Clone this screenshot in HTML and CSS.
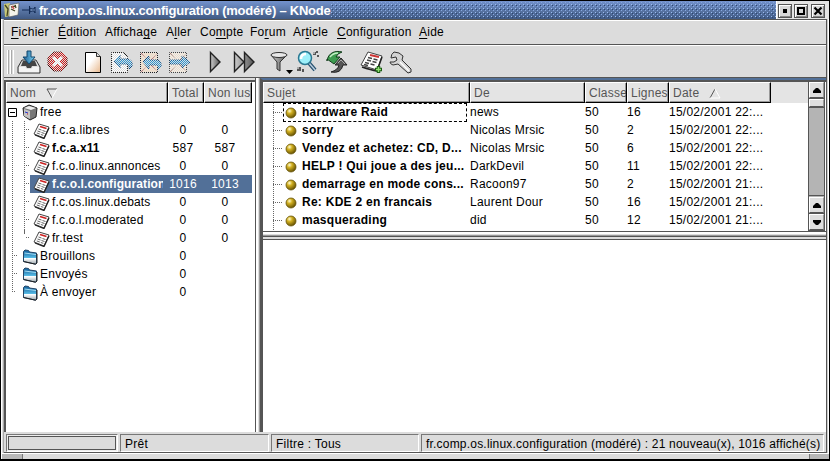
FILE: index.html
```
<!DOCTYPE html>
<html lang="fr">
<head>
<meta charset="utf-8">
<title>KNode</title>
<link rel="stylesheet" href="styles.css">
</head>
<body>
<svg class="defs" width="0" height="0">
<defs>
<linearGradient id="tri" x1="0" x2="1"><stop offset="0" stop-color="#ccc"/><stop offset="1" stop-color="#555"/></linearGradient>
<linearGradient id="blue" x1="0" x2="1"><stop offset="0" stop-color="#18598e"/><stop offset="1" stop-color="#7dd6f7"/></linearGradient>
<linearGradient id="fold" x1="0" y1="0" x2="0" y2="1"><stop offset="0" stop-color="#1c6fa8"/><stop offset=".15" stop-color="#1c6fa8"/><stop offset=".55" stop-color="#58bce6"/><stop offset=".6" stop-color="#fff"/><stop offset="1" stop-color="#98a4aa"/></linearGradient>
<linearGradient id="paper" x1="0" y1="0" x2="1" y2="1"><stop offset=".4" stop-color="#fff"/><stop offset="1" stop-color="#e8b88c"/></linearGradient>
<radialGradient id="gold" cx=".35" cy=".3" r=".75"><stop offset="0" stop-color="#fffbd0"/><stop offset=".35" stop-color="#d2b021"/><stop offset="1" stop-color="#5e4b00"/></radialGradient>
<symbol id="news" viewBox="0 0 17 16">
<path d="M6 1 16 4 11 15 1 11z" fill="#fff" stroke="#444"/><path d="M2 12 11 15.500 16 5" fill="none" stroke="#222" stroke-width="1.300"/>
<path d="m7 3.500 6.500 2" stroke="#c22" stroke-width="1.800"/><path d="m5.500 6 3 1m1 .5 3 1M4.500 8l3 1m1 .5 3 1M3.800 10l3 1m1 .5 2.500.8" stroke="#666"/>
</symbol>
<symbol id="folder" viewBox="0 0 16 16">
<path d="M1 2.500 2.500 1l3.500.5 1 1.500 7 1v10l-1 1.200L1 12.500z" fill="url(#fold)" stroke="#246"/><path d="M1 12.500 13 15.200 14.500 14V5" fill="none" stroke="#222"/><path d="m2 4 11.500 1.500" stroke="#a6dcf2"/>
</symbol>
<symbol id="ball" viewBox="0 0 12 12"><circle cx="6" cy="6" r="5" fill="url(#gold)" stroke="#685509" stroke-width=".8"/></symbol>
</defs>
</svg>
<div class="window">
<header class="title">
<svg class="appicon" viewBox="0 0 16 16"><path d="M0 2 6 1v13l-5 1z" fill="#c8c878"/><path d="m5 3 10-2-1 12-9 2z" fill="#f4f4ec" stroke="#555" stroke-width=".6"/><path d="m1 3 3 4-1 7M7 5l5-1M7 7l4 2M11 3l1 3" stroke="#442" fill="none" stroke-width="1.300"/><path d="m8 4 2 3" stroke="#c55" stroke-width="1.500"/></svg>
<svg class="pin" viewBox="0 0 14 8"><path d="M0 4h7M7.500 0v8M8 2l2 1h2l1-2v6l-1-2h-2L8 6z" fill="#7f9bc8" stroke="#122b55"/></svg>
<span class="caption">fr.comp.os.linux.configuration (modéré) – KNode</span>
<span class="dots"></span>
<span class="controls">
<button><svg viewBox="0 0 10 10"><path d="M3 3h4v4H3z"/></svg></button>
<button><svg viewBox="0 0 10 10"><path d="M2 2h6v6H2z" fill="none" stroke="#000" stroke-width="2"/></svg></button>
<button class="close"><svg viewBox="0 0 10 10"><path d="m1.500 1.500 7 7m0-7-7 7" stroke="#000" stroke-width="2.200"/></svg></button>
</span>
</header>
<div class="body">
<nav class="menu"><span><u>F</u>ichier</span><span><u>É</u>dition</span><span>Afficha<u>g</u>e</span><span>A<u>l</u>ler</span><span>Co<u>m</u>pte</span><span>Fo<u>r</u>um</span><span>Ar<u>t</u>icle</span><span><u>C</u>onfiguration</span><span><u>A</u>ide</span></nav>
<div class="toolbar">
<span class="grip"></span>
<svg viewBox="0 0 24 24"><path d="M5 10h14l4 7v6H1v-6z" fill="#ddd" stroke="#333"/><path d="M4 16h5l1 2h4l1-2h5l-2-5H6z" fill="#444"/><path d="M2 17h6l2 2h4l2-2h6v5H2z" fill="#f4f4f4"/><path d="M2 22.500h20" stroke="#999"/><path d="M10 1h4v6h4l-6 7-6-7h4z" fill="url(#blue)" stroke="#12486f"/></svg>
<svg class="off" viewBox="0 0 24 24"><path d="M8 2h8l5 5v8l-5 6H8l-6-6V7z" fill="#d01818" stroke="#400"/><path d="m7 7 9 9m0-9-9 9" stroke="#fff" stroke-width="3"/></svg>
<i></i>
<svg viewBox="0 0 24 24"><path d="M4.500 2.500h11l4 4v16h-15z" fill="url(#paper)" stroke="#000"/><path d="M15.500 2.500v4h4" fill="#ddd" stroke="#333"/></svg>
<svg class="off" viewBox="0 0 24 24"><path d="M1.500 2.500h12l4 4v16h-16z" fill="#fff" stroke="#222"/><path d="m4 11 6-6v4h8q5 1 4 7l-3 3q1-5-3-5h-6v4z" fill="#2b96d4" stroke="#0b4a83"/></svg>
<svg class="off" viewBox="0 0 24 24"><path d="M1.500 2.500h17v20h-17z" fill="#ffe2c2" stroke="#222"/><path d="m2 3 16 19m0-19L2 22" stroke="#b66"/><path d="m4 12 6-6v4h8q5 1 4 7l-3 3q1-5-3-5h-6v4z" fill="#2b96d4" stroke="#0b4a83"/></svg>
<svg class="off" viewBox="0 0 24 24"><path d="M1.500 2.500h17v20h-17z" fill="#ffeeda" stroke="#444"/><path d="m2 3 16 19m0-19L2 22" stroke="#a76"/><path d="M2 10h12V6l8 6-8 6v-4H2z" fill="#2b96d4" stroke="#0b4a83"/></svg>
<i></i>
<svg viewBox="0 0 24 24"><path d="M7.500 2.500 17 12l-9.500 9.500z" fill="url(#tri)" stroke="#222" stroke-width="1.400"/></svg>
<svg viewBox="0 0 24 24"><path d="M2.500 2.500 12 12l-9.500 9.500zM12.500 2.500 22 12l-9.500 9.500z" fill="url(#tri)" stroke="#222" stroke-width="1.400"/></svg>
<i></i>
<svg viewBox="0 0 24 24"><path d="m4 5 6 7v7l3 2v-9l7-7z" fill="url(#tri)" stroke="#333"/><ellipse cx="12" cy="5" rx="8" ry="2.500" fill="#e8e8e8" stroke="#333"/><path d="M19 20h7l-3.500 4z" fill="#000"/></svg>
<svg viewBox="0 0 24 24"><path d="m13 13 6 7" stroke="#24506e" stroke-width="4"/><path d="m13 13 6 7" stroke="#bcd" stroke-width="1.500"/><circle cx="9" cy="8" r="6.500" fill="#9df0fa" stroke="#2b7892" stroke-width="1.500"/><path d="M5 9q0-5 5-5" fill="none" stroke="#fff" stroke-width="2.500"/><path d="M17 2h3v3h-3zM21 5h2v2h-2zM1 17h4v4H1zM6 19h2v3H6zM20 1h2v2h-2z" fill="#555"/><path d="M17 2h2v2h-2zM1 17h2v2H1z" fill="#aaa"/></svg>
<svg viewBox="0 0 24 24"><path d="M2 11C3 3 10 0 17 2l-4 2-2 3h4l-6 7-7-5z" fill="#3d9c50" stroke="#123d1b"/><path d="M5 7q3-4 8-4" fill="none" stroke="#c3f0c5" stroke-width="1.500"/><path d="M6 22q10 2 12-7h4l-6-7-6 7h4q-1 5-8 7z" fill="#555" stroke="#222"/><path d="m13 13 3-3 4 4" fill="none" stroke="#aaa"/></svg>
<i></i>
<svg viewBox="0 0 24 24"><path d="M8 2 22 6l-5 14L1 15z" fill="#fff" stroke="#444"/><path d="M2 17q9 3 15 4l5-14" fill="none" stroke="#222" stroke-width="1.500"/><path d="m10 5 9 2" stroke="#c33" stroke-width="2"/><path d="m8 7.500 4 1m1.500.5 4 1M7 10l4 1m1.500.5 4 1M5 12.500l4 1m1.500.5 4 1M4 14.500l4 1" stroke="#444" stroke-width="1.300"/><path d="M18.500 16v7m-3.500-3.500h7" stroke="#175a10" stroke-width="3.500"/><path d="M18.500 17v5m-2.500-2.500h5" stroke="#8fe070" stroke-width="1.500"/></svg>
<svg viewBox="0 0 24 24"><path d="M2 8q0-4 3-6l5 1 4 3-1 4 9 9v3l-3 1-10-9-5 1q-3-1-3-3h4l3-2-1-3z" fill="#d4d4d4" stroke="#333"/><path d="m11 12 9 9" stroke="#fff" stroke-width="1.300"/></svg>
</div>
<main class="panes">
<section class="tree">
<div class="head treegrid"><b>Nom <svg viewBox="0 0 12 11"><path d="M11 1H1l5 9" fill="none" stroke="#555"/><path d="m11 1-5 9" stroke="#fff"/></svg></b><b>Total</b><b>Non lus</b></div>
<div class="rows">
<div class="row treegrid"><span class="name root"><svg class="box" viewBox="0 0 9 9"><path d="M.5.5h8v8h-8zM2 4.500h5" fill="#fff" stroke="#000"/></svg><svg class="ico cube" viewBox="0 0 16 17"><path d="m1 4 6-3 8 3-1 9-6 3-6-4z" fill="#777" stroke="#222"/><path d="m2 4 5-2 7 2-5 2z" fill="#eee"/><path d="m2 5 6 2v8l-6-3z" fill="#c4c4c4"/><path d="m3 8 3 1" stroke="#23c"/><path d="M5 10h1" stroke="#c22"/></svg>free</span></div>
<div class="row treegrid"><span class="name leaf"><svg class="ico"><use href="#news"/></svg>f.c.a.libres</span><span>0</span><span>0</span></div>
<div class="row treegrid"><span class="name leaf bold"><svg class="ico"><use href="#news"/></svg>f.c.a.x11</span><span>587</span><span>587</span></div>
<div class="row treegrid"><span class="name leaf tight"><svg class="ico"><use href="#news"/></svg>f.c.o.linux.annonces</span><span>0</span><span>0</span></div>
<div class="row treegrid selected"><span class="name leaf bold"><svg class="ico"><use href="#news"/></svg>f.c.o.l.configuration</span><span>1016</span><span>1013</span></div>
<div class="row treegrid"><span class="name leaf tight"><svg class="ico"><use href="#news"/></svg>f.c.os.linux.debats</span><span>0</span><span>0</span></div>
<div class="row treegrid"><span class="name leaf tight"><svg class="ico"><use href="#news"/></svg>f.c.o.l.moderated</span><span>0</span><span>0</span></div>
<div class="row treegrid"><span class="name leaf last"><svg class="ico"><use href="#news"/></svg>fr.test</span><span>0</span><span>0</span></div>
<div class="row treegrid"><span class="name folder"><svg class="ico"><use href="#folder"/></svg>Brouillons</span><span>0</span></div>
<div class="row treegrid"><span class="name folder"><svg class="ico"><use href="#folder"/></svg>Envoyés</span><span>0</span></div>
<div class="row treegrid"><span class="name folder end"><svg class="ico"><use href="#folder"/></svg>À envoyer</span><span>0</span></div>
</div>
</section>
<div class="vsplit"></div>
<section class="right">
<div class="list">
<div class="table">
<div class="head listgrid"><b>Sujet</b><b>De</b><b>Classe</b><b>Lignes</b><b>Date <svg viewBox="0 0 12 11"><path d="M1 10 6 1" stroke="#555"/><path d="m6 1 5 9H1" fill="none" stroke="#fff"/></svg></b></div>
<div class="msg listgrid"><span class="subject focus"><svg><use href="#ball"/></svg><em>hardware Raid</em></span><span>news</span><span>50</span><span>16</span><span>15/02/2001 22:...</span></div>
<div class="msg listgrid"><span class="subject"><svg><use href="#ball"/></svg><em>sorry</em></span><span>Nicolas Mrsic</span><span>50</span><span>2</span><span>15/02/2001 22:...</span></div>
<div class="msg listgrid"><span class="subject"><svg><use href="#ball"/></svg><em>Vendez et achetez: CD, D...</em></span><span>Nicolas Mrsic</span><span>50</span><span>6</span><span>15/02/2001 22:...</span></div>
<div class="msg listgrid"><span class="subject"><svg><use href="#ball"/></svg><em>HELP ! Qui joue a des jeu...</em></span><span>DarkDevil</span><span>50</span><span>11</span><span>15/02/2001 22:...</span></div>
<div class="msg listgrid"><span class="subject"><svg><use href="#ball"/></svg><em>demarrage en mode cons...</em></span><span>Racoon97</span><span>50</span><span>2</span><span>15/02/2001 21:...</span></div>
<div class="msg listgrid"><span class="subject"><svg><use href="#ball"/></svg><em>Re: KDE 2 en francais</em></span><span>Laurent Dour</span><span>50</span><span>16</span><span>15/02/2001 21:...</span></div>
<div class="msg listgrid"><span class="subject"><svg><use href="#ball"/></svg><em>masquerading</em></span><span>did</span><span>50</span><span>12</span><span>15/02/2001 21:...</span></div>
</div>
<div class="scroll"><button><svg viewBox="0 0 8 5"><path d="M3 0h2l3 3v2H0V3z"/></svg></button><span class="thumb"></span><span class="trough"></span><button><svg viewBox="0 0 8 5"><path d="M3 0h2l3 3v2H0V3z"/></svg></button><button><svg viewBox="0 0 8 5"><path d="M0 0h8v2L5 5H3L0 2z"/></svg></button></div>
</div>
<div class="hsplit"></div>
<div class="article"></div>
</section>
</main>
<footer class="status"><span class="progress"></span><span>Prêt</span><span>Filtre : Tous</span><span class="group">fr.comp.os.linux.configuration (modéré) : 21 nouveau(x), 1016 affiché(s)</span></footer>
</div>
<div class="handle"><span></span><span></span><span></span></div>
</div>
</body>
</html>
```

FILE: styles.css
```
* { box-sizing: border-box; }
body { margin: 0; width: 830px; height: 461px; overflow: hidden; background: #000; font: 12px/18px "Liberation Sans", Arial, sans-serif; letter-spacing: .25px; color: #000; }
svg { display: block; flex: none; overflow: visible; }
.defs { position: absolute; }
button { padding: 0; margin: 0; }
.window { margin: 1px 1px 2px 1px; width: 828px; height: 458px; display: flex; flex-direction: column; background: #dcdcdc; border-left: 1px solid #fff; }
.title { height: 18px; flex: none; display: flex; align-items: center; margin-left: -1px; background: linear-gradient(#7392cd, #55719f 60%, #405a85); padding-left: 3px; }
.appicon { width: 16px; height: 16px; }
.pin { width: 14px; height: 8px; margin: 0 3px 0 2px; }
.caption { color: #fff; font-weight: bold; font-size: 13px; white-space: nowrap; width: 292px; flex: none; letter-spacing: -.22px; padding-top: 2px; }
.dots { flex: 1; height: 16px; background: linear-gradient(#9bbcf0, #9bbcf0) 0 0/1px 1px; background: conic-gradient(at 1px 1px, transparent 75%, #9bbcf0 0) 0 2px/4px 4px, conic-gradient(at 1px 1px, transparent 75%, #2d466f 0) 1px 3px/4px 4px, conic-gradient(at 1px 1px, transparent 75%, #86a6de 0) 2px 0/4px 4px; }
.controls { width: 53px; height: 18px; background: #e4e4e4; border-left: 1px solid #fff; display: flex; gap: 2px; padding: 3px 0 0 1px; }
.controls button { width: 14px; height: 14px; border: 1px solid #555; box-shadow: inset 1px 1px #fff, inset -1px -1px #888; background: #d8d8d8; display: grid; place-items: center; }
.controls .close { margin-left: 1px; }
.controls svg { width: 10px; height: 10px; }
.body { width: 823px; height: 434px; margin-left: 2px; border-top: 1px solid #555; border-right: 1px solid #555; border-bottom: 1px solid #555; box-shadow: -1px 0 #aaa, 1px 0 #ccc, 2px 0 #fff; display: flex; flex-direction: column; flex: none; }
.menu { height: 25px; flex: none; border-top: 1px solid #fff; border-bottom: 1px solid #555; display: grid; grid-template-columns: 47px 47px 61px 34px 50px 43px 44px 82px 40px; padding: 2px 0 0 7px; white-space: nowrap; }
.menu u { text-underline-offset: 2px; }
.toolbar { height: 33px; flex: none; border-top: 1px solid #fff; border-bottom: 1px solid #555; display: flex; padding: 4px 0 0 3px; }
.toolbar svg { width: 24px; height: 24px; margin-right: 5px; }
.toolbar i { width: 6px; }
.grip { width: 7px; height: 24px; margin-right: 3px; background: repeating-linear-gradient(90deg, #fff 0 1px, #aaa 1px 2px, #dcdcdc 2px 3px); }
.off { mask: conic-gradient(#000 25%, transparent 0 50%, #000 0 75%, transparent 0) 0 0/2px 2px; }
.panes { height: 354px; flex: none; display: flex; background: #fff; }
.tree { width: 251px; border-left: 2px solid #555; border-top: 2px solid #555; margin-top: 2px; box-shadow: 0 -2px #dcdcdc; padding-right: 3px; }
.head { height: 21px; color: #555; background: #e4e4e4; }
.head b { font-weight: normal; white-space: nowrap; overflow: hidden; border: solid; border-width: 1px; border-color: #fff #000 #000 #fff; box-shadow: inset -1px -1px #999; padding: 1px 0 0 3px; display: flex; align-items: center; }
.head svg { width: 12px; height: 11px; margin-left: 10px; }
.treegrid { display: grid; grid-template-columns: 162px 36px 48px; }
.row { height: 18px; text-align: center; line-height: 19px; }
.rows .row > span:nth-child(2) { padding-right: 6px; }
.rows .row > span:nth-child(3) { padding-right: 6px; }
.row .name { display: flex; align-items: center; text-align: left; overflow: hidden; white-space: nowrap; margin-right: 5px; }
.row .ico { width: 17px; height: 16px; }
.root { padding-left: 2px; }
.box { width: 9px; height: 9px; margin-right: 5px; }
.row .cube { width: 16px; height: 17px; margin-right: 2px; }
.leaf { padding-left: 27px; background: linear-gradient(#666 50%, transparent 0) 6px 0/1px 2px repeat-y, linear-gradient(#666 50%, transparent 0) 18px 0/1px 2px repeat-y, linear-gradient(90deg, #666 50%, transparent 0) 20px 8px/2px 1px no-repeat, linear-gradient(90deg, #666 50%, transparent 0) 22px 8px/2px 1px no-repeat; }
.leaf .ico { margin-right: 2px; }
.leaf.last { background-size: 1px 2px, 1px 9px, 2px 1px, 2px 1px; background-repeat: repeat-y, no-repeat, no-repeat, no-repeat; }
.folder { padding-left: 16px; background: linear-gradient(#666 50%, transparent 0) 6px 0/1px 2px repeat-y, linear-gradient(90deg, #666 50%, transparent 0) 8px 8px/2px 1px no-repeat, linear-gradient(90deg, #666 50%, transparent 0) 10px 8px/2px 1px no-repeat; }
.folder.end { background: linear-gradient(90deg, #666 50%, transparent 0) 6px 8px/2px 1px no-repeat, linear-gradient(90deg, #666 50%, transparent 0) 8px 8px/2px 1px no-repeat, repeating-linear-gradient(#666 0 1px, transparent 1px 2px) 6px 0/1px 9px no-repeat; }
.folder .ico { margin-right: 1px; }
.tight { letter-spacing: .12px; }
.bold { font-weight: bold; letter-spacing: .1px; }
.selected { color: #fff; background: linear-gradient(90deg, transparent 24px, #527098 24px); }
.vsplit { width: 5px; border-left: 1px solid #555; background: linear-gradient(90deg, #fff 0 2px, #ddd 2px 3px, #999 3px); }
.right { flex: 1; display: flex; flex-direction: column; border-left: 3px solid #555; border-top: 2px solid #527098; }
.list { height: 151px; flex: none; border-top: 2px solid #555; display: flex; padding-right: 1px; }
.table { flex: 1; }
.listgrid { display: grid; grid-template-columns: 207px 115px 42px 42px 102px; }
.msg { height: 18px; white-space: nowrap; line-height: 19px; }
.msg .subject { padding-left: 22px; display: flex; align-items: center; background: linear-gradient(#666 50%, transparent 0) 10px 0/1px 2px repeat-y, repeating-linear-gradient(90deg, #666 0 1px, transparent 1px 2px) 10px 9px/9px 1px no-repeat; }
.subject svg { width: 12px; height: 12px; margin-right: 5px; }
.subject em { font-style: normal; font-weight: bold; letter-spacing: .26px; }
.focus { position: relative; }
.focus::after { content: ""; position: absolute; left: 20px; right: 3px; top: 0; bottom: 0; border: 1px dashed #000; }
.scroll { width: 17px; height: 149px; border: 1px solid #555; border-top: 0; background: #b4b4b4; display: flex; flex-direction: column; }
.scroll button, .thumb { height: 16px; flex: none; background: #dedede; border: 1px solid #fff; border-right-color: #999; border-bottom-color: #555; display: grid; place-items: center; box-shadow: 0 1px #555; }
.scroll button svg { width: 8px; height: 5px; }
.thumb { height: 8px; margin-top: 1px; }
.trough { flex: 1; margin-bottom: 1px; border-bottom: 1px solid #555; }
.scroll button + button { margin-top: 1px; }
.hsplit { height: 8px; flex: none; border-top: 1px solid #555; background: linear-gradient(#fff 0 2px, #ddd 2px 3px, #999 3px 4px, #555 4px 5px, #ddd 5px); }
.article { flex: 1; border-top: 1px solid #555; }
.status { flex: 1; display: flex; gap: 2px; padding: 2px 2px 2px 2px; }
.status span { height: 18px; border: 1px solid #777; border-right-color: #fff; border-bottom-color: #fff; padding-left: 4px; white-space: nowrap; line-height: 18px; flex: none; }
.status span:nth-child(1) { width: 112px; box-shadow: inset 0 0 0 1px #eee, inset 0 0 0 2px #555; }
.status span:nth-child(2) { width: 149px; }
.status span:nth-child(3) { width: 148px; }
.status span:nth-child(4) { width: 403px; letter-spacing: .2px; }
.handle { flex: 1; display: flex; border-top: 1px solid #fff; }
.handle span { flex: 1; background: #dcdcdc; border-left: 1px solid #777; }
.handle span:first-child, .handle span:last-child { flex: none; width: 20px; background: #b8b8b8; border-left: 0; }
.handle span:last-child { border-left: 1px solid #777; }
```
